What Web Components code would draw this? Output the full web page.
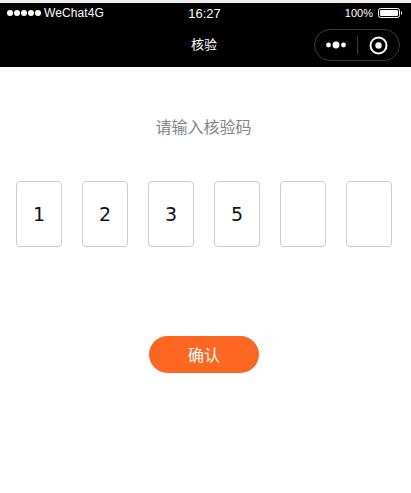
<!DOCTYPE html>
<html lang="zh">
<head>
<meta charset="utf-8">
<title>核验</title>
<style>
html, body { margin: 0; background: #fff; }
body { font-family: "Liberation Sans", "Noto Sans CJK SC", sans-serif; width: 411px; height: 493px; overflow: hidden; }
</style>
</head>
<body>
<wx-header title="核验"></wx-header>
<code-page heading="请输入核验码" code="1235" size="6" action="确认"></code-page>
<script>
class WxHeader extends HTMLElement {
  constructor() {
    super();
    this.attachShadow({ mode: "open" }).innerHTML = `
      <style>
        :host { display: block; background: #000; color: #fff; border-top: 3px solid #eeeeee; box-sizing: border-box; height: 67px; }
        .status { display: grid; grid-template-columns: 1fr auto 1fr; align-items: center; height: 20px; padding: 0 9px 0 7px; font-size: 12px; }
        .left, .right { display: flex; align-items: center; }
        .right { justify-content: flex-end; font-size: 11px; gap: 5px; }
        .right svg { margin-right: -1px; }
        .dots { display: flex; gap: 1px; margin-right: 3px; }
        .dots i { width: 6px; height: 6px; border-radius: 50%; background: #fff; }
        .left span:last-child { letter-spacing: .1px; }
        .time { font-size: 13px; }
        .nav { display: flex; align-items: center; height: 44px; padding: 0 11px 0 0; }
        .title { flex: 1; text-align: center; font-size: 13px; margin: -4px -86px 0 0; padding-left: 8px; }
        .capsule { display: flex; align-items: center; width: 86px; height: 32px; box-sizing: border-box; border: 1px solid #3b3b3b; border-radius: 16px; }
        .capsule svg { display: block; }
        .capsule .more { flex: 1; display: flex; justify-content: center; }
        .capsule .sep { width: 1px; height: 18px; background: #3b3b3b; }
        .capsule .home { flex: 1; display: flex; justify-content: center; }
      </style>
      <div class="status">
        <div class="left"><span class="dots"><i></i><i></i><i></i><i></i><i></i></span><span>WeChat4G</span></div>
        <div class="time">16:27</div>
        <div class="right"><span>100%</span>
          <svg width="25" height="10" viewBox="0 0 25 10"><rect x=".5" y=".5" width="21" height="9" rx="2" fill="none" stroke="#fff"/><rect x="2" y="2" width="18" height="6" rx="1" fill="#fff"/><path d="M23 3.5h1v3h-1z" fill="#fff"/></svg>
        </div>
      </div>
      <div class="nav">
        <div class="title">${this.getAttribute("title")}</div>
        <div class="capsule">
          <div class="more"><svg width="22" height="8" viewBox="0 0 22 8"><circle cx="3.5" cy="4" r="2.4" fill="#fff"/><circle cx="11" cy="4" r="3.4" fill="#fff"/><circle cx="18.5" cy="4" r="2.4" fill="#fff"/></svg></div>
          <div class="sep"></div>
          <div class="home"><svg width="19" height="19" viewBox="0 0 19 19"><circle cx="9.5" cy="9.5" r="8" fill="none" stroke="#fff" stroke-width="2"/><circle cx="9.5" cy="9.5" r="3.2" fill="#fff"/></svg></div>
        </div>
      </div>`;
  }
}
customElements.define("wx-header", WxHeader);

class CodeBox extends HTMLElement {
  constructor() {
    super();
    this.attachShadow({ mode: "open" }).innerHTML = `
      <style>
        :host { display: flex; align-items: center; justify-content: center; width: 46px; height: 66px; box-sizing: border-box; border: 1px solid #ccc; border-radius: 4px; font-family: "DejaVu Sans", sans-serif; font-size: 19px; color: #111; }
      </style>
      <slot></slot>`;
  }
}
customElements.define("code-box", CodeBox);

class CodePage extends HTMLElement {
  constructor() {
    super();
    const code = this.getAttribute("code") || "";
    const size = +this.getAttribute("size");
    let boxes = "";
    for (let i = 0; i < size; i++) boxes += `<code-box>${code[i] || ""}</code-box>`;
    this.attachShadow({ mode: "open" }).innerHTML = `
      <style>
        :host { display: block; }
        h2 { margin: 0; padding: 50px 4px 0 0; font-weight: 400; font-size: 16px; line-height: 22px; color: #7f8389; text-align: center; }
        .boxes { display: flex; justify-content: space-between; margin: 42px 19px 0 16px; }
        button { display: block; width: 110px; height: 37px; margin: 89px 152px 0 149px; padding: 0 0 2px; border: 0; border-radius: 19px; background: #fd6721; color: #fff; font: 400 16px "Liberation Sans", "Noto Sans CJK SC", sans-serif; }
      </style>
      <h2>${this.getAttribute("heading")}</h2>
      <div class="boxes">${boxes}</div>
      <button>${this.getAttribute("action")}</button>`;
  }
}
customElements.define("code-page", CodePage);
</script>
</body>
</html>
